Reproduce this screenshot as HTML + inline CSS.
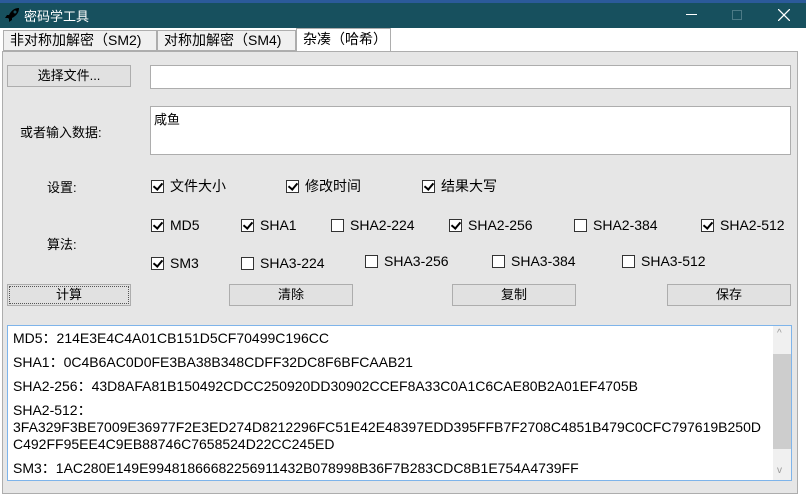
<!DOCTYPE html><html><head><meta charset="utf-8"><style>
*{margin:0;padding:0;box-sizing:border-box}
body{width:806px;height:503px;background:#fff;font-family:"Liberation Sans","Noto Sans CJK SC",sans-serif;font-size:14px;color:#000;position:relative;overflow:hidden}
.a{position:absolute;white-space:nowrap}
.btn{position:absolute;background:#e1e1e1;border:1px solid #adadad;text-align:center;font-size:13px;line-height:20px;height:22px}
.cb{position:absolute;font-size:14px;line-height:16px;white-space:nowrap}
.cb i{display:inline-block;width:13px;height:13px;border:1px solid #333;background:#fff;vertical-align:-2px;margin-right:6px;position:relative}
.cb i.c::after{content:"";position:absolute;left:3px;top:0px;width:4px;height:7px;border:solid #000;border-width:0 2px 2px 0;transform:rotate(40deg)}
.out{font-size:14px;line-height:17px}
</style></head><body>
<div class="a" style="left:0;top:0;width:806px;height:3px;background:#2b5a9a"></div>
<div class="a" style="left:0;top:3px;width:806px;height:25px;background:#17505e"></div>
<svg class="a" style="left:4px;top:7px" width="16" height="16" viewBox="0 0 16 16"><path d="M15 1C10 1 7 4 5 8L3 8 1 11 4 11 5 12 5 15 8 13 8 11C12 9 15 6 15 1Z" fill="#000"/><circle cx="11" cy="5" r="1.5" fill="#17505e"/></svg>
<div class="a" style="left:24px;top:6px;color:#fff;font-size:13px">密码学工具</div>
<div class="a" style="left:686px;top:14px;width:11px;height:1px;background:#fff"></div>
<div class="a" style="left:732px;top:10px;width:10px;height:10px;border:1px solid #4c7a86"></div>
<svg class="a" style="left:778px;top:9px" width="12" height="12"><path d="M0 0L12 12M12 0L0 12" stroke="#fff" stroke-width="1.3"/></svg>
<div class="a" style="left:3px;top:30px;width:154px;height:21px;background:#f0f0f0;border:1px solid #adadad;font-size:14px;line-height:19px;padding-left:6px">非对称加解密（SM2)</div>
<div class="a" style="left:157px;top:30px;width:139px;height:21px;background:#f0f0f0;border:1px solid #adadad;font-size:14px;line-height:19px;padding-left:6px">对称加解密（SM4)</div>
<div class="a" style="left:296px;top:28px;width:95px;height:23px;background:#fff;border:1px solid #adadad;border-bottom:none;font-size:14px;line-height:20px;padding-left:6px">杂凑（哈希）</div>
<div class="a" style="left:2px;top:51px;width:796px;height:443px;background:#e6e6e6;border:1px solid #adadad"></div>
<div class="btn" style="left:7px;top:65px;width:124px">选择文件...</div>
<div class="a" style="left:150px;top:65px;width:641px;height:24px;background:#fff;border:1px solid #adadad"></div>
<div class="a" style="left:20px;top:122px;font-size:13px">或者输入数据:</div>
<div class="a" style="left:150px;top:106px;width:641px;height:49px;background:#fff;border:1px solid #adadad;font-size:13px;padding:2px 3px">咸鱼</div>
<div class="a" style="left:47px;top:177px;font-size:13px">设置:</div>
<div class="cb" style="left:151px;top:178px"><i class="c"></i>文件大小</div>
<div class="cb" style="left:286px;top:178px"><i class="c"></i>修改时间</div>
<div class="cb" style="left:422px;top:178px"><i class="c"></i>结果大写</div>
<div class="a" style="left:47px;top:234px;font-size:13px">算法:</div>
<div class="cb" style="left:151px;top:217px"><i class="c"></i>MD5</div>
<div class="cb" style="left:241px;top:217px"><i class="c"></i>SHA1</div>
<div class="cb" style="left:331px;top:217px"><i></i>SHA2-224</div>
<div class="cb" style="left:449px;top:217px"><i class="c"></i>SHA2-256</div>
<div class="cb" style="left:574px;top:217px"><i></i>SHA2-384</div>
<div class="cb" style="left:701px;top:217px"><i class="c"></i>SHA2-512</div>
<div class="cb" style="left:151px;top:255px"><i class="c"></i>SM3</div>
<div class="cb" style="left:241px;top:255px"><i></i>SHA3-224</div>
<div class="cb" style="left:365px;top:253px"><i></i>SHA3-256</div>
<div class="cb" style="left:492px;top:253px"><i></i>SHA3-384</div>
<div class="cb" style="left:622px;top:253px"><i></i>SHA3-512</div>
<div class="btn" style="left:7px;top:284px;width:124px;outline:1px dotted #555;outline-offset:-3px">计算</div>
<div class="btn" style="left:229px;top:284px;width:124px">清除</div>
<div class="btn" style="left:452px;top:284px;width:124px">复制</div>
<div class="btn" style="left:667px;top:284px;width:124px">保存</div>
<div class="a" style="left:7px;top:325px;width:785px;height:156px;background:#fff;border:1px solid #7eb4ea"></div>
<div class="a" style="left:773px;top:326px;width:18px;height:154px;background:#f0f0f0"></div>
<div class="a" style="left:773px;top:354px;width:18px;height:95px;background:#cdcdcd"></div>
<div class="a" style="left:777px;top:328px;color:#999;font-size:10px">^</div>
<div class="a" style="left:777px;top:465px;color:#999;font-size:10px">v</div>
<div class="a out" style="left:13px;top:330px;white-space:normal;width:760px">
<div style="margin-bottom:7px">MD5：214E3E4C4A01CB151D5CF70499C196CC</div>
<div style="margin-bottom:7px">SHA1：0C4B6AC0D0FE3BA38B348CDFF32DC8F6BFCAAB21</div>
<div style="margin-bottom:7px">SHA2-256：43D8AFA81B150492CDCC250920DD30902CCEF8A33C0A1C6CAE80B2A01EF4705B</div>
<div>SHA2-512：</div><div>3FA329F3BE7009E36977F2E3ED274D8212296FC51E42E48397EDD395FFB7F2708C4851B479C0CFC797619B250D</div><div style="margin-bottom:7px">C492FF95EE4C9EB88746C7658524D22CC245ED</div>
<div>SM3：1AC280E149E99481866682256911432B078998B36F7B283CDC8B1E754A4739FF</div>
</div>
</body></html>
